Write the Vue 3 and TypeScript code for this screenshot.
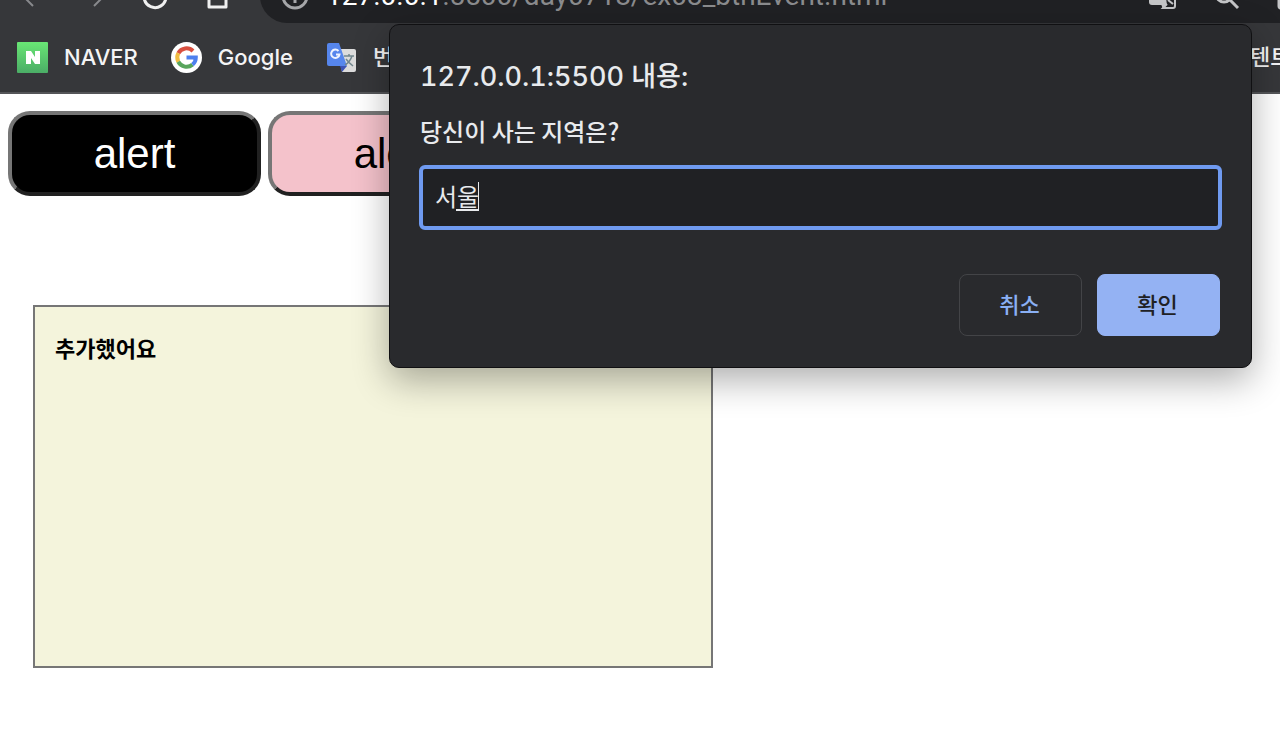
<script setup lang="ts">
import { ref } from 'vue'

const region = ref('서울')
const address = { host: '127.0.0.1', path: ':5500/day0718/ex03_btnEvent.html' }
</script>

<template>
  <div class="window">
    <header class="chrome">
      <div class="toolbar">
        <nav class="controls" aria-label="탐색">
          <button type="button" class="icon-button" aria-label="뒤로">
            <svg class="dim" width="28" height="28" viewBox="0 0 28 28"><path d="M17 4 L7 14 L16 23" /></svg>
          </button>
          <button type="button" class="icon-button" aria-label="앞으로">
            <svg class="dim" width="28" height="28" viewBox="0 0 28 28"><path d="M14 4 L24 14 L15 23" /></svg>
          </button>
          <button type="button" class="icon-button" aria-label="새로고침">
            <svg width="28" height="28" viewBox="0 0 28 28"><path d="M24 9 A11 11 0 1 0 25 14 M25 3 V10 H18" /></svg>
          </button>
          <button type="button" class="icon-button" aria-label="홈">
            <svg width="28" height="28" viewBox="0 0 28 28"><path d="M6 11 L14 3 L23 11 V24 H6 Z" stroke-linejoin="round" /></svg>
          </button>
        </nav>
        <div class="omnibox">
          <svg class="info" width="28" height="28" viewBox="0 0 28 28"><circle cx="14" cy="14" r="12" /><path d="M14 12 V21 M14 7 V9" /></svg>
          <span class="url"><b>{{ address.host }}</b>{{ address.path }}</span>
          <svg class="tool" width="32" height="28" viewBox="0 0 32 28">
            <path class="solid" d="M4 2 H18 L21 23 H6 Q3 23 3 20 V3 Z" />
            <path class="solid" d="M15 22 H21 L17 27 Z" />
            <path class="thin" d="M20 8 H27 Q29 8 29 10 V24 Q29 26 27 26 H17 L21 22 M22 18 L27 22" />
          </svg>
          <svg class="tool" width="28" height="28" viewBox="0 0 28 28"><circle cx="12" cy="12" r="8" /><path d="M18 18 L26 26" /></svg>
          <svg class="tool" width="28" height="28" viewBox="0 0 28 28"><path d="M5 3 H24 V26 H7 Q5 26 5 24 Z" /></svg>
        </div>
      </div>
      <nav class="bookmarks" aria-label="북마크">
        <a href="#naver">
          <svg width="31" height="31" viewBox="0 0 31 31">
            <defs><linearGradient id="green" x1="0" y1="0" x2="0" y2="1"><stop stop-color="#69e675" /><stop offset="1" stop-color="#4bad66" /></linearGradient></defs>
            <rect width="31" height="31" rx="1" fill="url(#green)" />
            <path d="M9 9 H14 L18 15 V9 H23 V22 H18 L14 16 V22 H9 Z" fill="#fff" />
          </svg>
          <span>NAVER</span>
        </a>
        <a href="#google">
          <svg width="31" height="31" viewBox="0 0 31 31" fill="none" stroke-width="4">
            <circle cx="15.500" cy="15.500" r="15.500" fill="#fff" />
            <path d="M7.300 11.200 A9.300 9.300 0 0 1 22 9" stroke="#d95040" />
            <path d="M7.300 19.800 A9.300 9.300 0 0 1 7.300 11.200" stroke="#f2bd42" />
            <path d="M21.500 22.600 A9.300 9.300 0 0 1 7.300 19.800" stroke="#58a55c" />
            <path d="M15.500 15.500 H24.800 Q24.800 20 21.500 22.600" stroke="#4e80ee" />
          </svg>
          <span>Google</span>
        </a>
        <a href="#translate">
          <svg width="31" height="31" viewBox="0 0 31 31">
            <path d="M12 7 H28 Q30 7 30 9 V28 Q30 30 28 30 H16 Z" fill="#dcdcdc" />
            <path d="M14 24 H21 L16 30 Z" fill="#3d53b5" />
            <path d="M3 1 H13 L21 24 H3 Q1 24 1 22 V3 Q1 1 3 1 Z" fill="#5686ed" />
            <path d="M12.500 9 A4.200 4.200 0 1 0 13.500 12.500 H10" fill="none" stroke="#eef3ff" stroke-width="2" />
            <path d="M18 14 H28 M23 12 V14 M26 14 Q24 20 19 23 M20 17 Q23 21 27 24" fill="none" stroke="#71868d" stroke-width="1.500" />
          </svg>
          <span>번역</span>
        </a>
        <a href="#content" class="last"><span>텐트</span></a>
      </nav>
    </header>

    <main class="page">
      <div class="actions">
        <button type="button" class="alert-button black">alert</button>
        <button type="button" class="alert-button pink">alert</button>
      </div>
      <section class="board">추가했어요</section>
    </main>

    <form class="dialog" role="dialog" aria-labelledby="dialog-title" @submit.prevent>
      <h1 id="dialog-title">127.0.0.1:5500 내용:</h1>
      <label for="region">당신이 사는 지역은?</label>
      <div class="field">
        <input id="region" v-model="region" type="text" autocomplete="off" />
        <i class="composition" aria-hidden="true"></i>
      </div>
      <div class="buttons">
        <button type="button" class="cancel">취소</button>
        <button type="submit" class="confirm">확인</button>
      </div>
    </form>
  </div>
</template>

<style>
html,
body {
  margin: 0;
  background: #fff;
}
</style>

<style scoped>
* {
  box-sizing: border-box;
}

.window {
  position: relative;
  min-height: 100vh;
  overflow: hidden;
  font-family: Inter, "Noto Sans CJK KR", sans-serif;
}

.chrome {
  overflow: hidden;
  background: #36373a;
  border-bottom: 2px solid #545558;
  color: #f4f4f5;
}

.toolbar {
  display: flex;
  align-items: flex-end;
  height: 23px;
}

.controls {
  display: flex;
  flex: none;
  gap: 34px;
  width: 260px;
  padding: 0 0 12px 17px;
}

.icon-button {
  display: flex;
  padding: 0;
  border: 0;
  background: none;
}

.toolbar svg {
  flex: none;
  fill: none;
  stroke: #f0f0f0;
  stroke-width: 3;
}

.toolbar svg.dim {
  stroke: #88898c;
  stroke-width: 2;
}

.omnibox {
  display: flex;
  flex: 1;
  align-items: center;
  height: 54px;
  padding-left: 21px;
  margin-right: -22px;
  border-radius: 27px 0 0 27px;
  background: #202124;
}

.toolbar .info,
.toolbar .tool {
  stroke: #a5a6a9;
}

.toolbar .tool {
  margin-right: 34px;
  stroke: #c4c5c7;
}

.toolbar .tool:last-child {
  margin-right: 0;
}

.toolbar .solid {
  fill: #c4c5c7;
  stroke: none;
}

.toolbar .thin {
  stroke-width: 2;
}

.url {
  flex: 1;
  padding-left: 17px;
  color: #8b8c8e;
  font-family: Roboto, sans-serif;
  font-size: 28px;
  line-height: 32px;
  white-space: nowrap;
}

.url b {
  color: #fff;
  font-weight: 400;
}

.bookmarks {
  display: flex;
  align-items: center;
  gap: 33px;
  height: 69px;
  padding-left: 17px;
}

.bookmarks a {
  display: flex;
  flex: none;
  align-items: center;
  gap: 16px;
  color: inherit;
  font-size: 22px;
  font-weight: 500;
  line-height: 30px;
  text-decoration: none;
  white-space: nowrap;
}

.bookmarks span {
  padding-bottom: 2px;
}

.bookmarks .last {
  width: 30px;
  margin-left: auto;
}

.page {
  padding: 17px 8px;
}

.actions {
  display: flex;
  gap: 7px;
}

.alert-button {
  width: 253px;
  height: 85px;
  border: 4px solid;
  border-color: #767676 #212121 #212121 #767676;
  border-radius: 22px;
  font: 42px/48px "Liberation Sans", sans-serif;
}

.black {
  background: #000;
  color: #fff;
}

.pink {
  background: #f4c2cb;
  color: #000;
}

.board {
  width: 680px;
  max-width: 100%;
  min-height: 363px;
  margin: 109px 0 0 25px;
  padding: 24px 20px;
  border: 2px solid #767676;
  background: #f4f4dc;
  color: #000;
  font: 700 22px/32px "Noto Sans CJK KR", sans-serif;
}

.dialog {
  position: absolute;
  top: 24px;
  right: 28px;
  left: 389px;
  padding: 32px 29px 31px;
  border: 1px solid #101012;
  border-radius: 10px;
  background: #292a2d;
  box-shadow: 0 12px 36px rgba(0, 0, 0, 0.32);
  color: #e8eaed;
}

h1 {
  margin: 0 0 16px;
  padding-left: 1px;
  font-size: 27px;
  font-weight: 500;
  font-variant-numeric: tabular-nums;
  line-height: 40px;
}

.dialog label {
  display: block;
  margin-bottom: 16px;
  padding-left: 1px;
  font-family: "Noto Sans CJK KR", sans-serif;
  font-size: 24px;
  font-weight: 500;
  line-height: 36px;
}

.field {
  position: relative;
}

.field input {
  display: block;
  width: 100%;
  height: 65px;
  padding: 0 12px 4px;
  border: 4px solid #6f9af0;
  border-radius: 6px;
  outline: 0;
  background: #202124;
  color: #e8eaed;
  font: 24px/32px Inter, "Noto Sans CJK KR", sans-serif;
}

.composition {
  position: absolute;
  top: 17px;
  left: 37px;
  width: 23px;
  height: 29px;
  border: solid #e8eaed;
  border-width: 0 1px 2px 0;
}

.buttons {
  display: flex;
  justify-content: flex-end;
  gap: 15px;
  margin-top: 44px;
  padding-right: 2px;
}

.buttons button {
  width: 123px;
  height: 62px;
  padding: 0 2px 4px 0;
  border: 1px solid #434447;
  border-radius: 8px;
  font: 500 22px/32px "Noto Sans CJK KR", sans-serif;
}

.cancel {
  background: transparent;
  color: #8ab0f4;
}

.buttons .confirm {
  border-color: #94b2f3;
  background: #94b2f3;
  color: #202124;
}
</style>
